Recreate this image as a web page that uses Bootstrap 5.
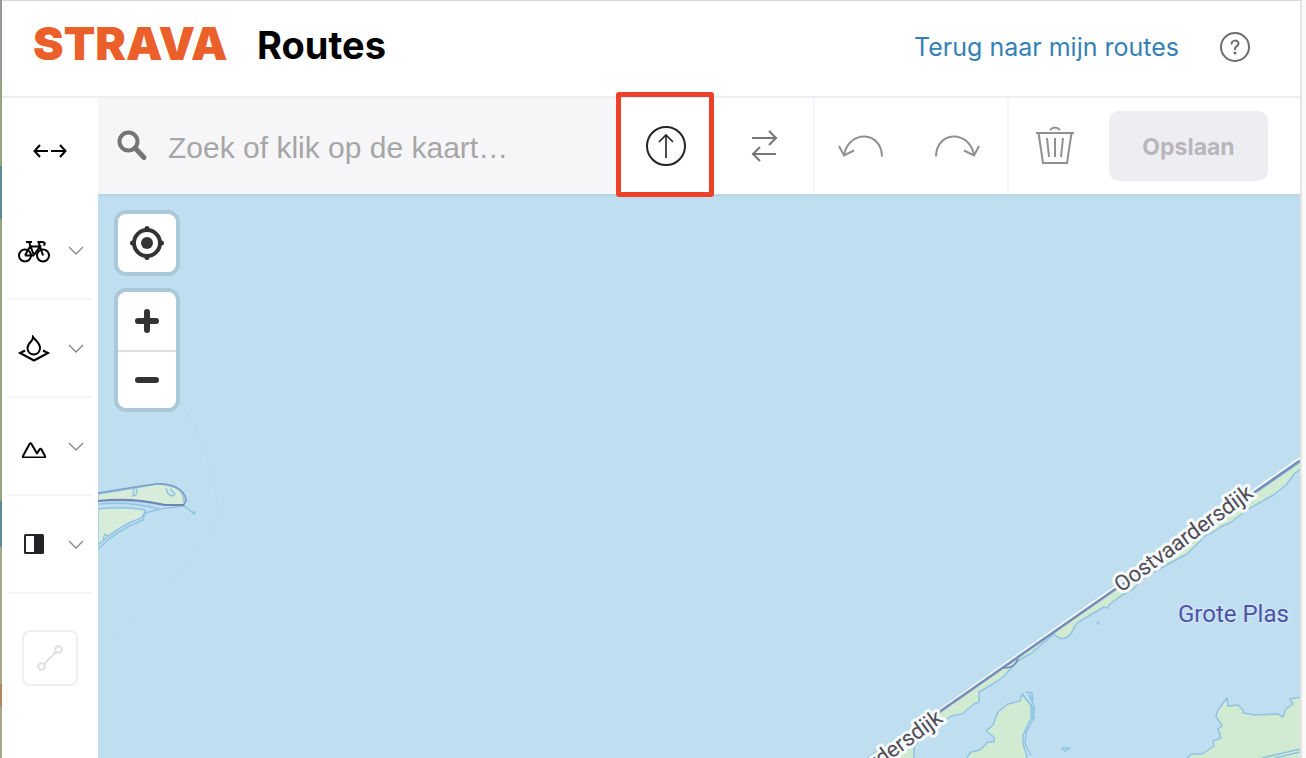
<!DOCTYPE html>
<html lang="nl">
<head>
<meta charset="utf-8">
<meta name="viewport" content="width=device-width, initial-scale=1">
<title>Strava Routes</title>
<link href="https://cdn.jsdelivr.net/npm/bootstrap@5.3.0/dist/css/bootstrap.min.css" rel="stylesheet">
<style>
  body { font-family: Inter, "Liberation Sans", sans-serif; background: #fafafa; color: #000; }
  .app-shell { margin: 0 4px 0 0; border-left: 2px solid; border-image: linear-gradient(#999 0 11%, #93a67a 11% 22%, #5b8a99 22% 29%, #93a67a 29% 66%, #5b8a99 66% 72%, #a9a98a 72% 90%, #b58560 90% 93%, #a9a98a 93%) 2; border-right: 0; background: #fff; }
  .app-frame { border-top: 1px solid #d8d8d8; border-right: 2px solid #e5e5e5; }
  .app-header { height: 97px; padding: 0 49px 8px 31px; border-bottom: 2px solid #eeeef2; }
  .brand-word { width: 200px; padding-bottom: 4px; font-size: 46px; line-height: 56px; font-weight: 900; color: #eb5f2b; }
  .page-title { font-size: 38px; line-height: 48px; font-weight: 700; }
  .header-links { padding-top: 4px; }
  .back-link { font-size: 25px; line-height: 32px; color: #3580b5; }
  .icon-btn { border: 0; background: none; padding: 0; display: flex; align-items: center; justify-content: center; color: inherit; }
  svg { display: block; flex: none; }
  .side-tools { width: 96px; }
  .side-toggle { height: 104px; }
  .side-row { width: 84px; height: 98px; margin: 0 6px; padding: 2px 8px 0 9px; justify-content: space-between; border-bottom: 2px solid #f6f6f8; }
  .segment-btn { width: 56px; height: 56px; margin: 36px auto 0 20px; border: 2px solid #eeeef3; border-radius: 8px; }
  .tool-bar { height: 96px; }
  .search-box { background: #f6f6f9; padding-left: 18px; gap: 18px; }
  .search-box input { font-family: "Liberation Sans", sans-serif; font-size: 30px; line-height: 40px; border: 0; background: none; outline: 0; }
  .search-box input::placeholder { color: #a6a6a6; opacity: 1; }
  .tool-cell { width: 98px; color: #909090; }
  .swap-cell { width: 101px; }
  .undo-cell { width: 92px; }
  .redo-cell { width: 102px; }
  .trash-cell { width: 92px; }
  .upload-mark { inset: -6px 0 -3px 0; border: 5px solid #ec4128; border-radius: 3px; pointer-events: none; }
  .cell-line { border-right: 2px solid #f6f6f8; }
  .save-btn { width: 159px; height: 70px; padding-top: 3px; margin: 0 32px 0 8px; font-size: 23px; font-weight: 700; background: #eeedf2; color: #b7b6bc; border: 0; border-radius: 10px; }
  .map-area { background: #bfdff0; overflow: hidden; }
  .map-area > svg { position: absolute; inset: 0; }
  .map-controls { padding: 16px; gap: 12px; }
  .map-group { border: 4px solid #abc7da; border-radius: 12px; background: #fff; width: 66px; }
  .map-group button { width: 58px; height: 58px; color: #333; }
  .map-group button + button { border-top: 2px solid #ddd; }
</style>
</head>
<body>
<div class="app-shell vh-100">
<div class="app-frame d-flex flex-column h-100 overflow-hidden">
  <header class="app-header d-flex align-items-center flex-shrink-0">
    <span class="brand-word">STRAVA</span>
    <h1 class="page-title mb-0 ms-4 me-auto">Routes</h1>
    <div class="header-links d-flex align-items-center">
      <a href="#" class="back-link text-decoration-none">Terug naar mijn routes</a>
      <button class="icon-btn ms-4 ps-3" aria-label="Help">
        <svg width="32" height="32" viewBox="0 0 32 32" fill="none" stroke="#6d6b78" stroke-width="2"><circle cx="16" cy="16" r="14"/><path d="M12.500 13.500c0-5 7-5 7-1 0 2.800-3.500 2.500-3.500 5.500v1" stroke-width="2"/><circle cx="16" cy="22" r="1.500" fill="#6d6b78" stroke="none"/></svg>
      </button>
    </div>
  </header>
  <div class="d-flex flex-grow-1">
    <nav class="side-tools flex-shrink-0" aria-label="Routeopties">
      <button class="icon-btn side-toggle w-100" aria-label="Paneel verbreden">
        <svg width="34" height="16" viewBox="0 0 34 16" fill="none" stroke="#000" stroke-width="2"><path d="M1 9h14M7 3 1.500 9 7 15M18 9h14M27 3l5.500 6L27 15"/></svg>
      </button>
      <div>
        <button class="icon-btn side-row" aria-label="Sport">
          <svg width="34" height="26" viewBox="0 0 34 26" fill="none" stroke="#000" stroke-width="2"><circle cx="8" cy="17.500" r="6"/><circle cx="26" cy="17.500" r="6"/><path d="m8 17.500 5-9h10l-6.500 9H8M17 17.500 12 4M9 4h6M26 17.500 21.500 4H25c3 0 3.500 2 1.500 3.500"/></svg>
          <svg width="16" height="10" viewBox="0 0 16 10" fill="none" stroke="#888" stroke-width="1.300"><path d="m1 1 7 7 7-7"/></svg>
        </button>
        <button class="icon-btn side-row" aria-label="Heatmap">
          <svg width="34" height="28" viewBox="0 0 34 28" fill="none" stroke="#000" stroke-width="2"><path d="M16 2C18 5 23 8 23 13c0 8.500-12.500 8.500-12.500 0 0-3 1.500-4.500 3.500-6.500 1.500-1.500 2-2.500 2-4.500ZM8 15.500 3 18l14 7.500L31 18l-5-2.500"/></svg>
          <svg width="16" height="10" viewBox="0 0 16 10" fill="none" stroke="#888" stroke-width="1.300"><path d="m1 1 7 7 7-7"/></svg>
        </button>
        <button class="icon-btn side-row" aria-label="Hoogte">
          <svg width="34" height="22" viewBox="0 0 34 20" fill="none" stroke="#000" stroke-width="2" stroke-linejoin="round"><path d="m6 19 6.500-12q1-1.500 2 0L20 16.500l2.500-4q1-1.500 2 0L28 19q.5 1.500-1 1.500H7q-1.500 0-1-1.500Z"/></svg>
          <svg width="16" height="10" viewBox="0 0 16 10" fill="none" stroke="#888" stroke-width="1.300"><path d="m1 1 7 7 7-7"/></svg>
        </button>
        <button class="icon-btn side-row" aria-label="Kaartstijl">
          <svg width="34" height="22" viewBox="0 0 34 22"><rect x="7" width="20" height="20" rx="1.500" fill="#242428"/><path fill="#fff" d="M9 2h8v16H9z"/></svg>
          <svg width="16" height="10" viewBox="0 0 16 10" fill="none" stroke="#888" stroke-width="1.300"><path d="m1 1 7 7 7-7"/></svg>
        </button>
      </div>
      <button class="icon-btn segment-btn" aria-label="Segmenten">
        <svg width="26" height="26" viewBox="0 0 26 26" fill="none" stroke="#e0dfe8" stroke-width="2"><circle cx="4.500" cy="21.500" r="3.300"/><circle cx="21.500" cy="4.500" r="3.300"/><path d="M7 19 19 7"/></svg>
      </button>
    </nav>
    <div class="d-flex flex-column flex-grow-1">
      <div class="tool-bar d-flex align-items-stretch flex-shrink-0">
        <label class="search-box d-flex align-items-center flex-grow-1">
          <svg width="34" height="34" viewBox="0 0 34 34" fill="none" stroke="#757575" stroke-width="4"><circle cx="12.500" cy="12.500" r="9"/><path d="m19 19 9 9.500" stroke-width="5" stroke-linecap="round"/></svg>
          <input class="flex-grow-1 px-0 pt-1 pb-0" type="text" placeholder="Zoek of klik op de kaart…" aria-label="Zoek op de kaart">
        </label>
        <div class="tool-cell position-relative d-flex">
          <button class="icon-btn w-100" aria-label="Uploaden">
            <svg width="42" height="42" viewBox="0 0 42 42" fill="none" stroke="#242428" stroke-width="2"><circle cx="22" cy="21" r="19"/><path d="M22 33V10M15 17l7-7 7 7" stroke-width="1.600"/></svg>
          </button>
          <span class="upload-mark position-absolute z-1"></span>
        </div>
        <button class="icon-btn tool-cell swap-cell cell-line" aria-label="Richting omkeren">
          <svg width="28" height="32" viewBox="0 0 28 32" fill="none" stroke="#777" stroke-width="2"><path d="M2 8h25M19 1l7 7-7 7M26 24H2M10 17l-7 7 7 7"/></svg>
        </button>
        <button class="icon-btn tool-cell undo-cell" aria-label="Ongedaan maken">
          <svg width="46" height="24" viewBox="0 0 46 24" fill="none" stroke="currentColor" stroke-width="2"><path d="M44 22.500C43.500-3.500 11-4.500 6 21M1 12l5 9.500 10-5"/></svg>
        </button>
        <button class="icon-btn tool-cell redo-cell cell-line" aria-label="Opnieuw">
          <svg width="46" height="24" viewBox="0 0 46 24" fill="none" stroke="currentColor" stroke-width="2"><path d="M2 22.500C2.500-3.500 35-4.500 40 21M45 12l-5 9.500-10-5"/></svg>
        </button>
        <button class="icon-btn tool-cell trash-cell" aria-label="Wissen">
          <svg width="38" height="40" viewBox="0 0 38 40" fill="none" stroke="currentColor" stroke-width="2"><path d="M0 7h38M2.500 7 7 37h24l4.500-30M14 4q5-5 10 0M11 12l2 19M19 12v19M27 12l-2 19"/></svg>
        </button>
        <div class="d-flex align-items-center"><button class="save-btn" disabled>Opslaan</button></div>
      </div>
      <main class="map-area position-relative flex-grow-1">
        <svg width="100%" height="100%" viewBox="98 194 1202 564" preserveAspectRatio="xMaxYMin slice" fill="none" stroke-linejoin="round">
          <defs><linearGradient id="shade" x2="0" y2="1"><stop stop-color="#b6d6e8"/><stop offset="1" stop-color="#bfdff0"/></linearGradient></defs>
          <rect x="98" y="194" width="1202" height="5" fill="url(#shade)"/>
          <path d="M211 472C215 500 222 508 218 518 198 563 140 610 98 661M184 407C203 440 207 460 211 472" stroke="#bbdbf0"/>
          <g stroke="#91c3e2" stroke-width="1.500">
            <path d="M98 494 135 488 156 484C170 483 183 490 186 498L184 505Q165 506 150 503T98 501Z" fill="#d8ecda"/>
            <path d="M98 509Q125 506 145 510L144 514 141 518Q118 526 98 545Z" fill="#d8ecda"/>
            <path d="M98 504Q130 501 160 509L184 506 192 512 195 514M160 509 145 513 143 520Q115 531 98 549M134 488 133 496 136 495 137 489M166 488 168 494 173 496 175 494 170 489M103 539 105 534 108 536M176 487Q184 492 184 503"/>
          </g>
          <path d="M98 493 135 487 156 484C171 483 185 489 186 500L184 505" stroke="#7b9fca" stroke-width="1.600"/>
          <path d="M98 501Q130 497 165 505L184 505" stroke="#7185b5" stroke-width="2"/>
          <circle cx="194" cy="513" r="1.700" fill="#91c3e2"/>

          <g fill="#d1ebd3" stroke="#91c3e2" stroke-width="1.500">
            <path d="M1302 461V468L1294 474 1287 484 1275 494 1247 510 1230 523 1222 526 1215 531 1206 535 1187 554 1170 563 1145 577 1133 589 1119 597 1110 604 1107 608 1104 607 1080 621 1076 624 1072 632Q1064 644 1054 634L1030 654 1019 660 1003 677 996 682 979 692 979 702 974 704 962 714 951 716 942 723 931 732 920 738 914 748 914 760H865Z"/>
            <path d="M965 760 971 752 980 750 988 742 994 742 994 737 986 731 993 725 998 712 1008 704 1020 701 1022 694 1031 705 1031 718 1023 735 1023 744 1028 760Z"/>
            <path d="M1022 694 1033 708 1033 719 1026 733 1025 744 1031 755M1026 692 1032 693 1033 700 1029 695 1034 706V719" fill="none"/>
            <path d="M1187 758 1192 754 1202 754 1214 746 1213 741 1221 738 1218 729 1222 726 1216 716 1218 710 1227 698 1228 706 1238 705 1243 710 1243 713 1255 715 1278 714 1283 717 1286 709 1293 704 1290 699 1302 697V762H1187Z"/>
            <path d="M1262 758 1300 749M1275 758 1300 752M1062 748 1070 748 1065 751Z"/>
          </g>
          <circle cx="1098" cy="623" r="1.500" fill="#91c3e2"/>
          <path d="M866 761 1300 458" stroke="#fff" stroke-width="2"/>
          <path d="M866 763 1300 460.500" stroke="#788fbe" stroke-width="2.600"/>
          <path d="M1003 668Q1014 669 1018 659" stroke="#7185b5" stroke-width="1.500"/>
          <g font-family="Roboto, sans-serif" font-size="22" paint-order="stroke" stroke-linejoin="round">
            <g fill="#514c55" stroke="#f8fbfd" stroke-width="6">
              <text transform="translate(1121 593) rotate(-36)">Oostvaardersdijk</text>
              <text transform="translate(944 721) rotate(-36)" text-anchor="end">rdersdijk</text>
            </g>
            <text x="1178" y="622" font-size="24" fill="#4c54a8" stroke="#cfe4f4" stroke-width="3">Grote Plas</text>
          </g>
        </svg>
        <div class="map-controls position-relative d-flex flex-column align-items-start">
          <div class="map-group">
            <button class="icon-btn" aria-label="Mijn locatie"><svg width="36" height="36" viewBox="0 0 36 36" fill="none" stroke="#333"><circle cx="18" cy="18" r="13" stroke-width="4"/><circle cx="18" cy="18" r="6" fill="#333" stroke="none"/><path d="M18 3.500v1M18 31.500v1M3.500 18h1M31.500 18h1" stroke-width="5" stroke-linecap="round"/></svg></button>
          </div>
          <div class="map-group">
            <button class="icon-btn" aria-label="Inzoomen"><svg width="24" height="24" viewBox="0 0 24 24" stroke="#333" stroke-width="6" stroke-linecap="round"><path d="M3 12h18M12 3v18"/></svg></button>
            <button class="icon-btn" aria-label="Uitzoomen"><svg width="24" height="24" viewBox="0 0 24 24" stroke="#333" stroke-width="6" stroke-linecap="round"><path d="M3 12h18"/></svg></button>
          </div>
        </div>
      </main>
    </div>
  </div>
</div>
</div>
<script src="https://cdn.jsdelivr.net/npm/bootstrap@5.3.0/dist/js/bootstrap.bundle.min.js"></script>
</body>
</html>
